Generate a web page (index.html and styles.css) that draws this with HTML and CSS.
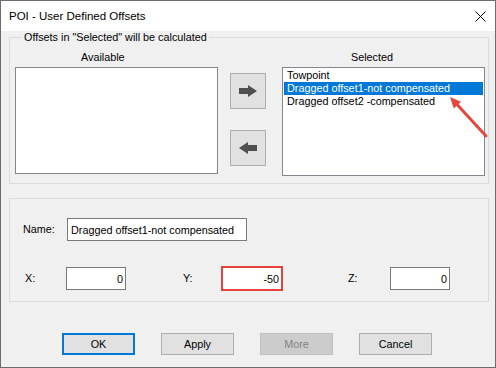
FILE: index.html
```html
<!DOCTYPE html>
<html lang="en">

<head>
  <meta charset="UTF-8">
  <meta name="viewport" content="width=device-width, initial-scale=1.0">
  <title>POI - User Defined Offsets</title>
  <link rel="stylesheet" href="styles.css">
</head>

<body>
  <div class="window">
    <div class="titlebar">
      <span class="title">POI - User Defined Offsets</span>
      <svg class="close" width="11" height="11" viewBox="0 0 11 11">
        <path d="M0.5 0.5 L10.5 10.5 M10.5 0.5 L0.5 10.5" stroke="#000" stroke-width="1" fill="none" />
      </svg>
    </div>

    <!-- list selection -->
    <fieldset class="group offsets">
      <legend>Offsets in "Selected" will be calculated</legend>
      <div class="lists">
        <div class="col">
          <div class="list-label available-label">Available</div>
          <ul class="listbox available"></ul>
        </div>
        <div class="movers">
          <button class="move">
            <svg width="18" height="12" viewBox="0 0 18 12">
              <path d="M0 3 H9 V0 L18 6 L9 12 V9 H0 Z" fill="#505050" />
            </svg>
          </button>
          <button class="move">
            <svg width="18" height="12" viewBox="0 0 18 12">
              <path d="M18 3 H9 V0 L0 6 L9 12 V9 H18 Z" fill="#505050" />
            </svg>
          </button>
        </div>
        <div class="col">
          <div class="list-label selected-label">Selected</div>
          <ul class="listbox selected">
            <li>Towpoint</li>
            <li class="active">Dragged offset1-not compensated</li>
            <li>Dragged offset2 -compensated</li>
          </ul>
        </div>
      </div>
    </fieldset>

    <!-- offset details -->
    <fieldset class="group details">
      <div class="row name-row">
        <label class="field-label name-label">Name:</label>
        <input class="text name-input" type="text" value="Dragged offset1-not compensated">
      </div>
      <div class="row xyz-row">
        <label class="field-label lbl-x">X:</label>
        <input class="text num" type="text" value="0">
        <label class="field-label lbl-y">Y:</label>
        <input class="text num flagged" type="text" value="-50">
        <label class="field-label lbl-z">Z:</label>
        <input class="text num" type="text" value="0">
      </div>
    </fieldset>

    <div class="buttons">
      <button class="btn default">OK</button>
      <button class="btn">Apply</button>
      <button class="btn" disabled>More</button>
      <button class="btn">Cancel</button>
    </div>

    <!-- red callout arrow -->
    <svg class="callout" width="52" height="56" viewBox="0 0 52 56">
      <line x1="45" y1="47" x2="16.5" y2="16.1" stroke="#e5463d" stroke-width="3" stroke-linecap="round" />
      <polygon points="9,8 20.1,12.7 12.8,19.5" fill="#e5463d" />
    </svg>
  </div>
</body>

</html>
```

FILE: styles.css
```css
body {
  margin: 0;
  background: #f0f0f0;
  font-family: "Liberation Sans", Arial, sans-serif;
  font-size: 10.8px;
  color: #000;
}

.window {
  position: relative;
  width: 496px;
  height: 368px;
  box-sizing: border-box;
  border: 1px solid #6d6d6d;
  background: #f0f0f0;
}

/* title bar */
.titlebar {
  height: 30px;
  background: #fff;
  display: flex;
  align-items: center;
  justify-content: space-between;
  padding: 0 9px 0 8px;
}

.title {
  font-size: 11.5px;
}

/* group boxes */
.group {
  margin: 0 0 0 8px;
  width: 480px;
  box-sizing: border-box;
  border: 1px solid #dcdcdc;
  min-inline-size: 0;
}

.group legend {
  margin-left: 7px;
  padding: 0 2px;
  line-height: 13px;
}

.offsets {
  padding: 7px 3px 7px 5px;
}

.lists {
  display: flex;
  align-items: flex-start;
}

.col {
  width: 203px;
}

.list-label {
  line-height: 13px;
  margin-bottom: 3px;
}

.available-label {
  padding-left: 66px;
}

.selected-label {
  padding-left: 69px;
}

.listbox {
  margin: 0;
  padding: 1px;
  list-style: none;
  background: #fff;
  border: 1px solid #828790;
  box-sizing: border-box;
  width: 203px;
}

.available {
  height: 107px;
}

.selected {
  height: 109px;
}

.listbox li {
  height: 13px;
  line-height: 13px;
  padding-left: 3px;
  white-space: nowrap;
}

.listbox li.active {
  background: #0078d7;
  color: #fff;
}

.movers {
  display: flex;
  flex-direction: column;
  gap: 21px;
  padding-top: 22px;
  margin: 0 16px 0 12px;
}

.move {
  width: 36px;
  height: 36px;
  box-sizing: border-box;
  border: 1px solid #adadad;
  background: #e1e1e1;
  padding: 0;
  display: flex;
  align-items: center;
  justify-content: center;
}

/* details box */
.details {
  margin-top: 14px;
  padding: 19px 0 11px 13px;
}

.row {
  display: flex;
  align-items: center;
}

.xyz-row {
  margin-top: 26px;
}

.field-label {
  line-height: 13px;
  box-sizing: border-box;
}

.name-label {
  width: 44px;
}

.lbl-x {
  width: 43px;
  padding-left: 2px;
}

.lbl-y {
  width: 39px;
  margin-left: 57px;
}

.lbl-z {
  width: 42px;
  margin-left: 66px;
}

.text {
  font: inherit;
  color: #000;
  height: 23px;
  box-sizing: border-box;
  border: 1px solid #7a7a7a;
  background: #fff;
  padding: 0 3px;
  margin: 0;
  outline: none;
}

.name-input {
  width: 180px;
}

.num {
  width: 60px;
  text-align: right;
  padding-right: 2px;
}

.flagged {
  border-color: #e8413a;
  box-shadow: 0 0 0 1px #e8413a;
}

/* dialog buttons */
.buttons {
  display: flex;
  gap: 26px;
  margin-top: 31px;
  padding-left: 61px;
}

.btn {
  font: inherit;
  color: #000;
  width: 73px;
  height: 22px;
  box-sizing: border-box;
  border: 1px solid #adadad;
  background: #e1e1e1;
  padding: 0;
}

.btn.default {
  border: 2px solid #0078d7;
}

.btn:disabled {
  background: #cccccc;
  border-color: #bfbfbf;
  color: #838383;
}

.callout {
  position: absolute;
  left: 440px;
  top: 88px;
}
```
